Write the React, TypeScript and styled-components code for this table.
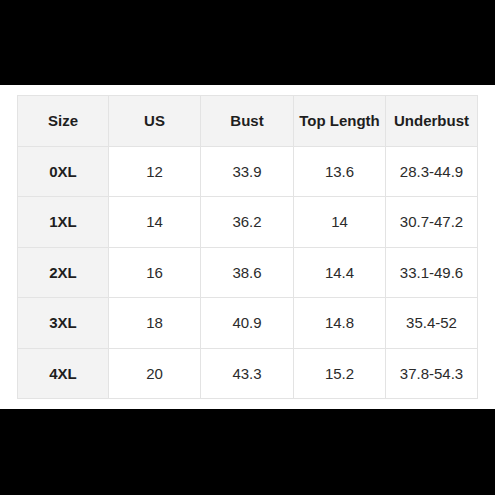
import React from "react";
import styled, { createGlobalStyle } from "styled-components";

const GlobalStyle = createGlobalStyle`
  html, body {
    margin: 0;
    padding: 0;
    background: #ffffff;
  }
`;

const Page = styled.div`
  width: 495px;
  height: 495px;
  display: flex;
  flex-direction: column;
  background: #ffffff;
  font-family: "Liberation Sans", Arial, sans-serif;
`;

const Bar = styled.div<{ size: number }>`
  height: ${(props) => props.size}px;
  flex-shrink: 0;
  background: #000000;
`;

const Main = styled.main`
  flex: 1;
  display: flex;
  align-items: center;
  padding: 0 18px 0 17px;
`;

const Table = styled.div`
  display: grid;
  grid-template-columns: 91px 92px 93px 92px 92px;
  grid-auto-rows: 50.5px;
  border-top: 1px solid #e3e3e3;
  border-left: 1px solid #e3e3e3;
`;

interface CellProps {
  head?: boolean;
  shaded?: boolean;
}

const Cell = styled.div<CellProps>`
  display: flex;
  align-items: center;
  justify-content: center;
  border-right: 1px solid #e3e3e3;
  border-bottom: 1px solid #e3e3e3;
  background: ${(props) => (props.shaded ? "#f3f3f3" : "#ffffff")};
  color: ${(props) => (props.head ? "#1e1e1e" : "#2b2b2b")};
  font-weight: ${(props) => (props.head ? 700 : 400)};
  font-size: 15px;
  white-space: nowrap;
`;

const headers = ["Size", "US", "Bust", "Top Length", "Underbust"];

const rows = [
  ["0XL", "12", "33.9", "13.6", "28.3-44.9"],
  ["1XL", "14", "36.2", "14", "30.7-47.2"],
  ["2XL", "16", "38.6", "14.4", "33.1-49.6"],
  ["3XL", "18", "40.9", "14.8", "35.4-52"],
  ["4XL", "20", "43.3", "15.2", "37.8-54.3"],
];

export default function App() {
  return (
    <>
      <GlobalStyle />
      <Page>
        <Bar size={85} />
        <Main>
          <Table>
            {headers.map((h) => (
              <Cell key={h} head shaded>
                {h}
              </Cell>
            ))}
            {rows.map((row) =>
              row.map((value, i) => (
                <Cell key={row[0] + i} head={i === 0} shaded={i === 0}>
                  {value}
                </Cell>
              ))
            )}
          </Table>
        </Main>
        <Bar size={86} />
      </Page>
    </>
  );
}
